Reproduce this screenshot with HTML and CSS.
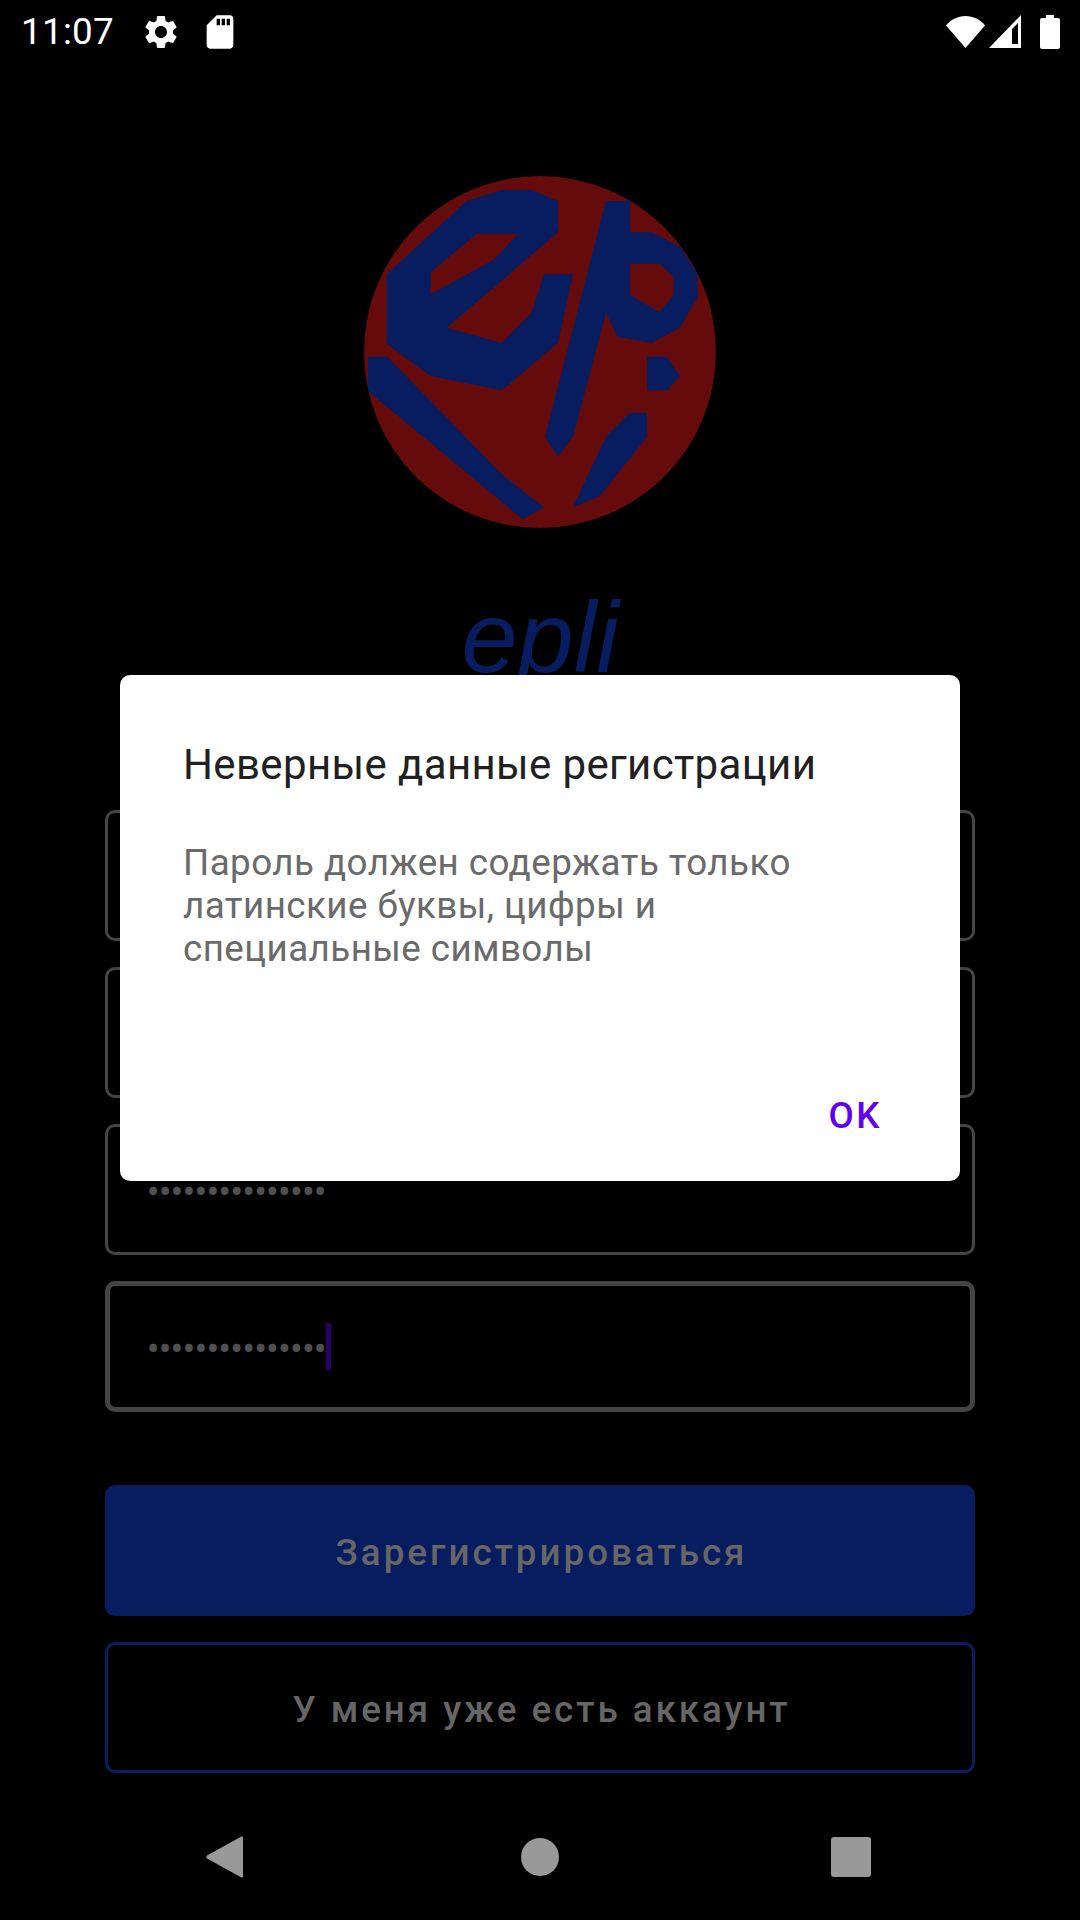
FILE: index.html
```html
<!DOCTYPE html>
<html lang="ru">
<head>
    <meta charset="UTF-8">
    <meta name="viewport" content="width=device-width, initial-scale=1.0">
    <title>epli - Регистрация</title>
    <link rel="stylesheet" href="styles.css">
</head>
<body>

    <div class="screen">

        <div class="status-bar">
            <span class="clock">11:07</span>
            <svg class="icon-gear" viewBox="0 0 24 24"><path d="M19.14 12.94c.04-.3.06-.61.06-.94 0-.32-.02-.64-.07-.94l2.03-1.58c.18-.14.23-.41.12-.61l-1.92-3.32c-.12-.22-.37-.29-.59-.22l-2.39.96c-.5-.38-1.03-.7-1.62-.94l-.36-2.54c-.04-.24-.24-.41-.48-.41h-3.84c-.24 0-.43.17-.47.41l-.36 2.54c-.59.24-1.13.57-1.62.94l-2.39-.96c-.22-.08-.47 0-.59.22L2.74 8.87c-.12.21-.08.47.12.61l2.03 1.58c-.05.3-.09.63-.09.94s.02.64.07.94l-2.03 1.58c-.18.14-.23.41-.12.61l1.92 3.32c.12.22.37.29.59.22l2.39-.96c.5.38 1.03.7 1.62.94l.36 2.54c.05.24.24.41.48.41h3.84c.24 0 .44-.17.47-.41l.36-2.54c.59-.24 1.13-.56 1.62-.94l2.39.96c.22.08.47 0 .59-.22l1.92-3.32c.12-.22.07-.47-.12-.61l-2.01-1.58zM12 15.6c-1.98 0-3.6-1.62-3.6-3.6s1.62-3.6 3.6-3.6 3.6 1.62 3.6 3.6-1.62 3.6-3.6 3.6z"/></svg>
            <svg class="icon-sd" viewBox="0 0 24 24"><path d="M18 2h-8L4.02 8 4 20c0 1.1.9 2 2 2h12c1.1 0 2-.9 2-2V4c0-1.1-.9-2-2-2zm-6 6h-2V4h2v4zm3 0h-2V4h2v4zm3 0h-2V4h2v4z"/></svg>
            <svg class="icon-wifi" viewBox="0 0 39 32"><path d="M0 9.500C5 3.500 12 0 19.500 0S34 3.500 39 9.500L19.500 32z"/></svg>
            <svg class="icon-signal" viewBox="0 0 32 33"><path fill-rule="evenodd" d="M32 0v33H0zM23 29h6V8l-6 6z"/></svg>
            <svg class="icon-battery" viewBox="0 0 20 34"><path d="M6 0h8v3h4c1.100 0 2 .9 2 2v27c0 1.100-.9 2-2 2H2c-1.100 0-2-.9-2-2V5c0-1.100.9-2 2-2h4z"/></svg>
        </div>

        <div class="content">
            <svg class="logo" viewBox="42 33 1056 1056">
                <circle cx="570" cy="561" r="528" fill="#650b0b"/>
                <g fill="#071d5f">
                    <path fill-rule="evenodd" d="M110 328 350 108 455 75H545L624 108V202L290 488 455 534 545 443 582 328H669L624 534 455 676 242 633 110 537ZM242 322 380 207H503L435 282 242 388Z"/>
                    <path fill-rule="evenodd" d="M768 108H840V202H905L990 245 1043 328V397L990 488 905 534 802 515 768 443 669 815 624 875 585 815ZM840 296H928L971 335V390L928 441 840 390Z"/>
                    <path d="M891 575H951L990 633 951 676H891Z"/>
                    <path d="M840 743H891V815L750 993 669 1027 768 815Z"/>
                    <path d="M54 575H112L455 928 582 1027 518 1063 54 678Z"/>
                </g>
            </svg>
            <div class="brand">epli</div>

            <div class="fields">
                <div class="field"></div>
                <div class="field"></div>
                <div class="field"><span class="dots">•••••••••••••••</span></div>
                <div class="field field-focused"><span class="dots">•••••••••••••••</span><span class="caret"></span></div>
            </div>

            <button class="btn btn-filled" type="button">Зарегистрироваться</button>
            <button class="btn btn-outline" type="button">У меня уже есть аккаунт</button>
        </div>

        <div class="nav-bar">
            <svg class="nav-back" viewBox="0 0 46 42"><path d="M3 22.500a2 2 0 0 1 0-3L37 .8c1-.7 2-.2 2 1v38.400c0 1.200-1 1.700-2 1z"/></svg>
            <svg class="nav-home" viewBox="0 0 42 42"><circle cx="21" cy="21" r="19"/></svg>
            <svg class="nav-recent" viewBox="0 0 42 42"><rect x="1" y="1" width="40" height="40" rx="3"/></svg>
        </div>

        <div class="dialog">
            <h2 class="dialog-title">Неверные данные регистрации</h2>
            <p class="dialog-text">Пароль должен содержать только латинские буквы, цифры и специальные символы</p>
            <div class="dialog-actions">
                <button class="dialog-ok" type="button">OK</button>
            </div>
        </div>

    </div>

</body>
</html>
```

FILE: styles.css
```css
* {
    box-sizing: border-box;
}

body {
    margin: 0;
    background-color: #000;
    font-family: Roboto, 'Noto Sans', sans-serif;
}

.screen {
    position: relative;
    width: 1080px;
    height: 1920px;
    overflow: hidden;
    display: flex;
    flex-direction: column;
    background-color: #000;
}

/* status bar */
.status-bar {
    height: 63px;
    flex-shrink: 0;
    display: flex;
    align-items: center;
    padding-left: 21px;
}

.status-bar svg {
    fill: #fff;
    flex-shrink: 0;
}

.clock {
    width: 120px;
    color: #fff;
    font-size: 36.75px;
    letter-spacing: 0.3px;
}

.icon-gear {
    width: 40px;
    height: 40px;
}

.icon-sd {
    width: 40px;
    height: 40px;
    margin-left: 19px;
}

.icon-wifi {
    width: 39px;
    height: 32px;
    margin-left: 706px;
}

.icon-signal {
    width: 32px;
    height: 33px;
    margin-left: 4px;
}

.icon-battery {
    width: 20px;
    height: 34px;
    margin-left: 19px;
}

/* main form */
.content {
    flex: 1;
    display: flex;
    flex-direction: column;
    align-items: center;
    padding: 113px 105px 0;
}

.logo {
    width: 352px;
    height: 352px;
    flex-shrink: 0;
}

.brand {
    height: 120px;
    margin-top: 49px;
    color: #071d5f;
    font-family: 'Liberation Sans', Arial, sans-serif;
    font-style: italic;
    font-size: 101px;
    line-height: 120px;
}

.fields {
    width: 100%;
    margin-top: 113px;
    display: flex;
    flex-direction: column;
    gap: 26px;
}

.field {
    height: 131px;
    display: flex;
    align-items: center;
    padding-left: 38.7px;
    border: 3px solid #444;
    border-radius: 10px;
}

.field-focused {
    border-width: 5px;
    padding-left: 36.7px;
}

.dots {
    padding-top: 4px;
    color: #505050;
    font-size: 38px;
    line-height: 1;
    letter-spacing: -0.88px;
}

.caret {
    width: 5px;
    height: 47px;
    background-color: #2a0066;
}

.btn {
    width: 100%;
    height: 131px;
    flex-shrink: 0;
    padding: 4px 0 0 3px;
    border-radius: 10px;
    color: #666;
    font-family: inherit;
    font-size: 36.75px;
    font-weight: 500;
}

.btn-filled {
    margin-top: 73px;
    border: none;
    background-color: #071d5f;
    letter-spacing: 3px;
}

.btn-outline {
    margin-top: 26px;
    border: 3px solid #071d5f;
    background-color: transparent;
    letter-spacing: 2.95px;
}

/* navigation bar */
.nav-bar {
    height: 126px;
    flex-shrink: 0;
    display: flex;
    align-items: center;
    gap: 269px;
    padding: 0 0 0 204px;
}

.nav-bar svg {
    fill: #999;
    height: 42px;
}

.nav-back {
    width: 46px;
}

.nav-home,
.nav-recent {
    width: 42px;
}

/* alert dialog over the form */
.dialog {
    position: absolute;
    left: 120px;
    top: 675px;
    width: 840px;
    height: 506px;
    display: flex;
    flex-direction: column;
    padding: 60px 63px 0;
    background-color: #fff;
    border-radius: 10px;
}

.dialog-title {
    margin: 0;
    color: #212121;
    font-size: 42px;
    font-weight: 400;
    line-height: 60px;
    letter-spacing: 0.37px;
}

.dialog-text {
    margin: 46px 0 0;
    color: #6a6a6a;
    font-size: 36.75px;
    line-height: 43px;
    letter-spacing: 0.45px;
}

.dialog-actions {
    margin-top: auto;
    padding-bottom: 44px;
    display: flex;
    justify-content: flex-end;
}

.dialog-ok {
    padding: 0;
    margin-right: 15px;
    border: none;
    background: none;
    color: #6200ee;
    font-family: inherit;
    font-size: 36.75px;
    font-weight: 500;
    letter-spacing: 2.5px;
}
```
